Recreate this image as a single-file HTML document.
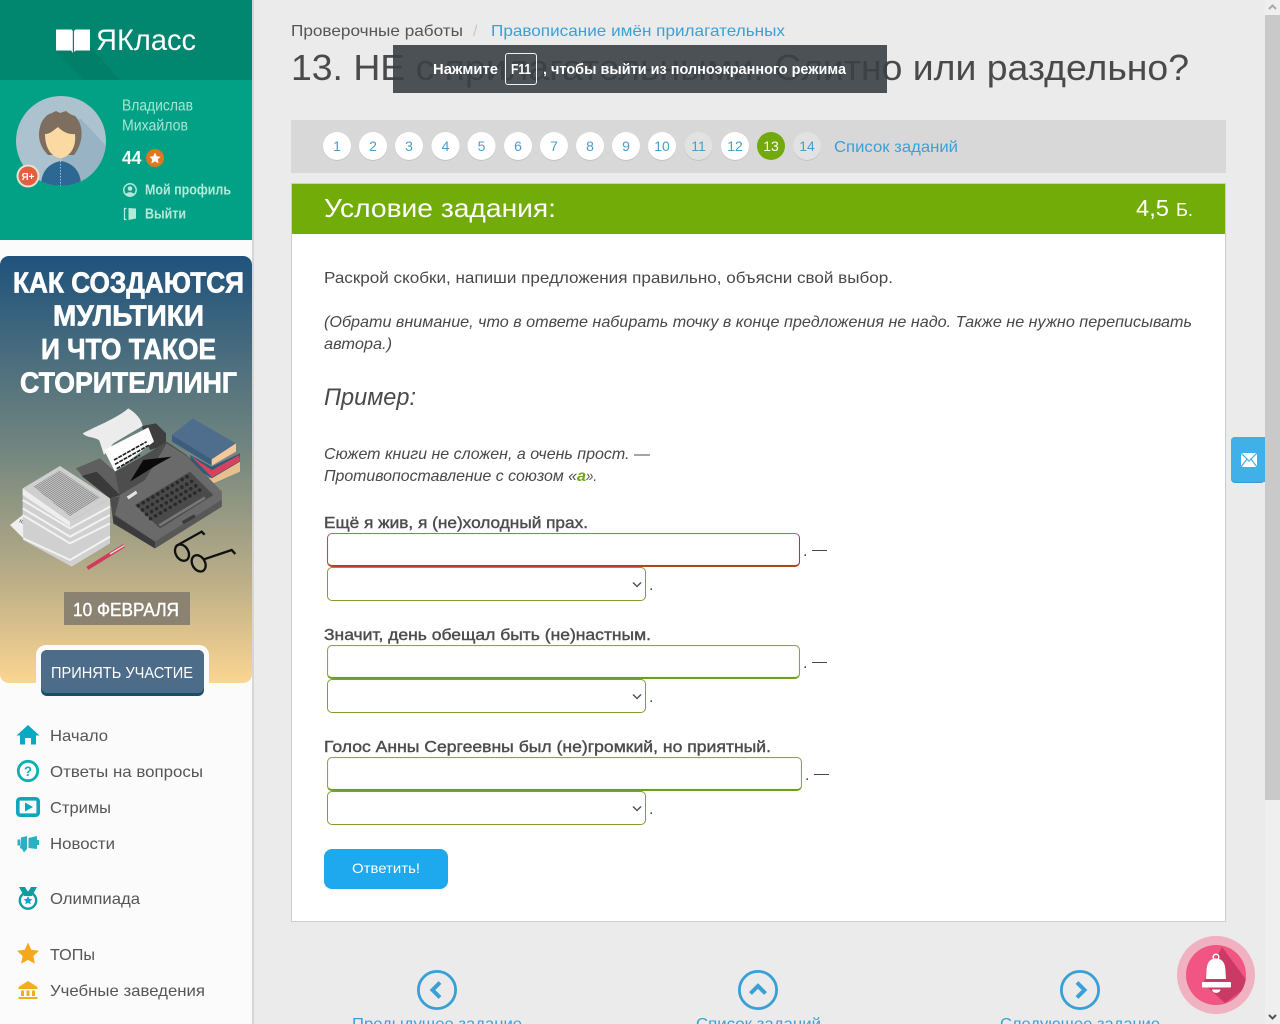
<!DOCTYPE html>
<html lang="ru">
<head>
<meta charset="utf-8">
<title>13. НЕ с прилагательными</title>
<style>
html,body{margin:0;padding:0;width:1280px;height:1024px;overflow:hidden;background:#ebebeb;font-family:"Liberation Sans",sans-serif}
svg.page{position:absolute;left:0;top:0}
svg.chev{position:absolute;pointer-events:none}
svg text{font-family:"Liberation Sans",sans-serif}
input,select{position:absolute;box-sizing:border-box;background:#fff;border-radius:5px;margin:0;padding:0 4px;outline:none}
input{border:1px solid #86a92e;border-bottom:2px solid #6ea01c;box-shadow:inset 0 0 1px #cfe0a8}
select{border:1px solid #7ea02e;width:319px;height:34px;left:327px;-webkit-appearance:none;appearance:none}
input.bad{border-color:#d34fa6 #b0297f #b0451f #c0398e}
</style>
</head>
<body>
<svg class="page" width="1280" height="1024" viewBox="0 0 1280 1024" xmlns="http://www.w3.org/2000/svg">
<defs>
<linearGradient id="ban" x1="0" y1="0" x2="0" y2="1"><stop offset="0" stop-color="#1f527c"/><stop offset=".45" stop-color="#71857f"/><stop offset=".75" stop-color="#b9ad87"/><stop offset="1" stop-color="#fbd592"/></linearGradient>
<clipPath id="avc"><circle cx="61" cy="141" r="45"/></clipPath>
<clipPath id="bellc"><circle cx="1216" cy="975" r="30"/></clipPath>
<clipPath id="headc"><rect x="0" y="0" width="252" height="80"/></clipPath>
<pattern id="hatch" width="12" height="5" patternUnits="userSpaceOnUse" patternTransform="rotate(33)"><rect width="12" height="2.2" fill="#444"/></pattern>
</defs>

<!-- main background & scrollbar -->
<rect x="0" y="0" width="1280" height="1024" fill="#ebebeb"/>
<rect x="1265" y="0" width="15" height="1024" fill="#efefef"/>
<rect x="1265" y="15" width="15" height="785" fill="#c9c9c9"/>
<path d="M1269 9l3.5-3.5 3.5 3.5" fill="none" stroke="#a8a8a8" stroke-width="2"/>
<path d="M1269 1015l3.5 3.5 3.5-3.5" fill="none" stroke="#505050" stroke-width="2"/>

<!-- sidebar -->
<rect x="252" y="0" width="2" height="1024" fill="#d6d6d6"/>
<rect x="0" y="0" width="252" height="1024" fill="#fbfbfb"/>
<rect x="0" y="0" width="252" height="80" fill="#01876f"/>
<path d="M56 52L84 80H120L90 46L72 40Z" fill="#017f69" clip-path="url(#headc)"/>
<rect x="0" y="80" width="252" height="160" fill="#02a084"/>

<!-- logo -->
<path d="M56 29.5H71.5C72.5 30 72.8 31 72.8 32V50.5L73 53L71 50.5H56Z" fill="#fff"/>
<path d="M90 29.5H75.5C74.5 30 74 31 74 32V52L76 50.5H90Z" fill="#fff"/>
<text x="96" y="50" font-size="30" fill="#fff" textLength="100" lengthAdjust="spacingAndGlyphs">ЯКласс</text>

<!-- avatar -->
<circle cx="61" cy="141" r="45" fill="#adc2cf"/>
<g clip-path="url(#avc)">
<path d="M80 118L110 150V190H70L60 150Z" fill="#98b3c4"/>
<path d="M41 186C41 170 50 163 61 161C72 163 81 170 81 186V190H41Z" fill="#2c6893"/>
<path d="M60.5 161V186" stroke="#9cc0d6" stroke-width="1" stroke-dasharray="1.5 1.5"/>
<path d="M39 135C39 124 44 115 52 113L56 111L60 113L66 111L70 114L75 116C80 121 82 128 81.500 136C81 143 78 150 74 155L48 155C43 150 39 143 39 135Z" fill="#7d6e5f"/>
<path d="M45 134C50 134 54 130 58 127C62 131 68 135 75 134C76 144 73 151 68 155C63 159 58 159 53 155C48 151 45 144 45 134Z" fill="#fad9a3"/>
</g>
<circle cx="28" cy="176" r="11.500" fill="#e8e0d8"/>
<circle cx="28" cy="176" r="9.500" fill="#e2603d"/>
<text x="21.500" y="180" font-size="10.500" font-weight="700" fill="#fff" textLength="13" lengthAdjust="spacingAndGlyphs">Я+</text>

<text x="122" y="110.500" font-size="15.500" fill="#a5e5d6" textLength="71" lengthAdjust="spacingAndGlyphs">Владислав</text>
<text x="122" y="130.500" font-size="15.500" fill="#a5e5d6" textLength="66" lengthAdjust="spacingAndGlyphs">Михайлов</text>
<text x="122" y="164" font-size="18" font-weight="700" fill="#f3fbf9" textLength="19.500" lengthAdjust="spacingAndGlyphs">44</text>
<circle cx="155" cy="158" r="9" fill="#e2761c"/>
<path d="M155 152.500l1.700 3.700 4 .5-2.900 2.700.8 4-3.600-2-3.600 2 .8-4-2.900-2.700 4-.5z" fill="#fff"/>
<circle cx="130" cy="190" r="6.200" fill="none" stroke="#b5e9da" stroke-width="1.500"/>
<circle cx="130" cy="188.500" r="2.300" fill="#b5e9da"/>
<path d="M125.500 194.500C127 191.500 133 191.500 134.500 194.500C132 196.500 128 196.500 125.500 194.500Z" fill="#b5e9da"/>
<text x="145" y="194.500" font-size="15" font-weight="700" fill="#b4e9da" textLength="86" lengthAdjust="spacingAndGlyphs">Мой профиль</text>
<path d="M126.500 208.500H124.500V219.500H126.500" fill="none" stroke="#b5e9da" stroke-width="1.300"/>
<path d="M128.500 208L136 208.500V218.500L128.500 220Z" fill="#b5e9da"/>
<text x="145" y="218.500" font-size="15" font-weight="700" fill="#b4e9da" textLength="41" lengthAdjust="spacingAndGlyphs">Выйти</text>

<!-- banner -->
<rect x="0" y="256" width="252" height="427" rx="9" fill="url(#ban)"/>
<g font-weight="700" fill="#fff" stroke="#fff" stroke-width=".7" font-size="29">
<text x="13" y="292.500" textLength="231" lengthAdjust="spacingAndGlyphs">КАК СОЗДАЮТСЯ</text>
<text x="53" y="325.500" textLength="151" lengthAdjust="spacingAndGlyphs">МУЛЬТИКИ</text>
<text x="41" y="359" textLength="175" lengthAdjust="spacingAndGlyphs">И ЧТО ТАКОЕ</text>
<text x="20" y="392.500" textLength="217" lengthAdjust="spacingAndGlyphs">СТОРИТЕЛЛИНГ</text>
</g>

<!-- illustration, drawn in 3x crop coordinates -->
<g transform="translate(0 400) scale(.33333)">
 <!-- books -->
 <path d="M625 235L720 185V215L640 250Z" fill="#e8c08e"/>
 <path d="M570 165L635 200L720 160V185L635 235L575 195Z" fill="#2f5a7a"/>
 <path d="M572 168L636 210L718 165L720 183L636 232Z" fill="#d8415c"/>
 <path d="M516 105L578 55L708 130L635 178Z" fill="#4f6e8e"/>
 <path d="M516 105L635 178V197L516 125Z" fill="#3c5d7d"/>
 <path d="M635 178L708 130V155L635 197Z" fill="#f5c79c"/>
 <!-- roller & paper -->
 <path d="M425 78L468 70L498 100V135L450 150Z" fill="#3e3e3e"/>
 <path d="M248 100C290 78 350 55 385 25C410 40 425 60 428 78L340 130L312 165L298 122C288 110 262 115 248 100Z" fill="#ececec"/>
 <path d="M312 150L445 82L462 125L345 215Z" fill="#fdfdfd"/>
 <path d="M342 180L440 125M345 193L448 135M350 206L420 165" stroke="#222" stroke-width="5" stroke-dasharray="12 3" fill="none"/>
 <!-- body -->
 <path d="M228 205L300 175L345 215L435 165L500 125L560 165L665 275V320L465 445L340 370L330 295L245 225Z" fill="#4d4d4d"/>
 <path d="M228 205L300 175L345 215L360 290L330 295L245 225Z" fill="#5f5f5f"/>
 <path d="M360 285L435 240L500 130L560 168L665 275V300L465 425L345 345Z" fill="#6a6a6a"/>
 <path d="M340 345L465 425V445L340 370Z" fill="#3b3b3b"/>
 <path d="M465 425L665 300V320L465 445Z" fill="#585858"/>
 <path d="M390 245L430 180L515 170L470 195Z" fill="#0a0a0a"/>
 <path d="M245 228L290 215L360 285L330 295Z" fill="#3a3a3a"/>
 <path d="M380 290L408 272L412 280L386 298Z" fill="#e6e6e6"/>
 <path d="M405 315L570 215L640 285L480 385Z" fill="#4a4a4a"/>
 <g stroke="#2a2a2a" stroke-width="11" stroke-linecap="round" stroke-dasharray="0 17" fill="none">
  <path d="M415 317L568 226"/><path d="M428 330L582 240"/><path d="M440 343L595 253"/><path d="M452 356L608 265"/>
 </g>
 <path d="M478 376L615 293" stroke="#777" stroke-width="8"/>
 <path d="M548 368L585 347" stroke="#3b3b3b" stroke-width="10"/>
 <!-- papers -->
 <path d="M30 375L68 345L205 420L205 470L70 415Z" fill="#efefef"/>
 <path d="M60 362L185 422" stroke="#555" stroke-width="10" stroke-dasharray="2 3" fill="none"/>
 <path d="M68 265V340L70 420L215 500L330 430V295L210 365Z" fill="#d0d0d0"/>
 <path d="M68 300L210 385L330 320M68 325L210 410L330 345M68 345L210 430L330 370M70 415L210 480L330 410" stroke="#f2f2f2" stroke-width="6" fill="none"/>
 <path d="M68 265L180 198L330 295L210 365Z" fill="#cfcfcf"/>
 <path d="M68 265L210 365V380L68 285Z" fill="#eeeeee"/>
 <path d="M100 260L178 212L300 292L210 348Z" fill="url(#hatch)" opacity=".6"/>
 <!-- pen -->
 <path d="M262 505L372 437" stroke="#d23a5c" stroke-width="11"/>
 <path d="M330 462L372 437" stroke="#e8e0e0" stroke-width="4"/>
 <!-- glasses -->
 <g fill="none" stroke="#111" stroke-width="7">
  <ellipse cx="546" cy="458" rx="19" ry="26" transform="rotate(-30 546 458)"/>
  <ellipse cx="596" cy="490" rx="19" ry="26" transform="rotate(-30 596 490)"/>
  <path d="M528 438L605 395L614 404M612 478L695 450L706 462"/>
 </g>
</g>

<rect x="64" y="592" width="126" height="33" fill="#8b8271"/>
<text x="73" y="616" font-size="18" fill="#fff" textLength="106" lengthAdjust="spacingAndGlyphs" stroke="#fff" stroke-width=".4">10 ФЕВРАЛЯ</text>
<rect x="36" y="645" width="173" height="56" rx="10" fill="#fbfbfb"/>
<rect x="41" y="650" width="163" height="46" rx="6" fill="#164f69"/>
<rect x="41" y="650" width="163" height="43" rx="6" fill="#4d6c8a"/>
<text x="51" y="678" font-size="16" fill="#fff" textLength="142" lengthAdjust="spacingAndGlyphs">ПРИНЯТЬ УЧАСТИЕ</text>

<!-- side nav -->
<g font-size="16" fill="#555">
<text x="50" y="741" textLength="58" lengthAdjust="spacingAndGlyphs">Начало</text>
<text x="50" y="777" textLength="153" lengthAdjust="spacingAndGlyphs">Ответы на вопросы</text>
<text x="50" y="813" textLength="61" lengthAdjust="spacingAndGlyphs">Стримы</text>
<text x="50" y="849" textLength="65" lengthAdjust="spacingAndGlyphs">Новости</text>
<text x="50" y="904" textLength="90" lengthAdjust="spacingAndGlyphs">Олимпиада</text>
<text x="50" y="960" textLength="45" lengthAdjust="spacingAndGlyphs">ТОПы</text>
<text x="50" y="996" textLength="155" lengthAdjust="spacingAndGlyphs">Учебные заведения</text>
</g>
<path d="M28 725L39.500 735.500H36V744.500H31V738H25V744.500H20V735.500H16.500Z" fill="#0aa9c2"/>
<circle cx="28" cy="771" r="9.700" fill="none" stroke="#0db0b0" stroke-width="2.800"/>
<text x="24" y="776" font-size="14" font-weight="700" fill="#0db0b0" textLength="8" lengthAdjust="spacingAndGlyphs">?</text>
<rect x="17.800" y="798.800" width="20.400" height="16.400" rx="2.500" fill="none" stroke="#0fa6bd" stroke-width="3.600"/>
<path d="M25 802.500L33 807L25 811.500Z" fill="#0fa6bd"/>
<path d="M21 837.500L27 836V849L24 852.500L22 849L20 848Z" fill="#2cafc2"/>
<path d="M28.500 838L37 836V849L28.500 848Z" fill="#2cafc2"/>
<rect x="17.500" y="839.500" width="2.500" height="6" fill="#2cafc2"/>
<rect x="37" y="840" width="2" height="5" fill="#2cafc2"/>
<path d="M19 887H25L28 892L31 887H37L32 896H24Z" fill="#0f9ea0"/>
<circle cx="28" cy="900.500" r="8.200" fill="none" stroke="#0f9ea0" stroke-width="2.400"/>
<path d="M28 896l1.300 2.900 3.100.3-2.300 2.100.7 3.100-2.800-1.600-2.800 1.600.7-3.100-2.300-2.100 3.100-.3z" fill="#0aa9c2"/>
<path d="M28 942.500l3.300 7.200 7.700 1-5.700 5.300 1.600 7.800-6.900-3.900-6.900 3.900 1.600-7.800-5.700-5.300 7.700-1z" fill="#f5a81c"/>
<path d="M28 981L37.500 987V989H18.500V987Z" fill="#f2ad1e"/>
<path d="M21 990.500H24V996H21ZM26.500 990.500H29.500V996H26.500ZM32 990.500H35V996H32Z" fill="#f2ad1e"/>
<rect x="18.500" y="997" width="19" height="2" fill="#f2ad1e"/>

<!-- breadcrumbs and title -->
<text x="291" y="36" font-size="16" fill="#555" textLength="172" lengthAdjust="spacingAndGlyphs">Проверочные работы</text>
<text x="473" y="36" font-size="16" fill="#c6c6c6">/</text>
<text x="491" y="36" font-size="16" fill="#3aa0d8" textLength="294" lengthAdjust="spacingAndGlyphs">Правописание имён прилагательных</text>
<text x="291" y="80" font-size="36" fill="#4a4a4a" textLength="898" lengthAdjust="spacingAndGlyphs">13. НЕ с прилагательными. Слитно или раздельно?</text>

<!-- pagination -->
<rect x="291" y="120" width="935" height="53" fill="#d8d8d8"/>
<g fill="#c4c4c4">
<circle cx="337" cy="147" r="14"/><circle cx="373" cy="147" r="14"/><circle cx="409" cy="147" r="14"/><circle cx="445.500" cy="147" r="14"/><circle cx="481.500" cy="147" r="14"/><circle cx="518" cy="147" r="14"/><circle cx="554" cy="147" r="14"/><circle cx="590" cy="147" r="14"/><circle cx="626" cy="147" r="14"/><circle cx="662" cy="147" r="14"/><circle cx="698.500" cy="147" r="14"/><circle cx="735" cy="147" r="14"/><circle cx="807" cy="147" r="14"/>
</g>
<g fill="#fff">
<circle cx="337" cy="146" r="14"/><circle cx="373" cy="146" r="14"/><circle cx="409" cy="146" r="14"/><circle cx="445.500" cy="146" r="14"/><circle cx="481.500" cy="146" r="14"/><circle cx="518" cy="146" r="14"/><circle cx="554" cy="146" r="14"/><circle cx="590" cy="146" r="14"/><circle cx="626" cy="146" r="14"/><circle cx="662" cy="146" r="14"/><circle cx="735" cy="146" r="14"/>
</g>
<circle cx="698.500" cy="146" r="14" fill="#e2e2e2"/>
<circle cx="807" cy="146" r="14" fill="#e2e2e2"/>
<circle cx="771" cy="146" r="14" fill="#72a90d"/>
<g font-size="14" fill="#4b9dc9" text-anchor="middle">
<text x="337" y="151">1</text><text x="373" y="151">2</text><text x="409" y="151">3</text><text x="445.500" y="151">4</text><text x="481.500" y="151">5</text><text x="518" y="151">6</text><text x="554" y="151">7</text><text x="590" y="151">8</text><text x="626" y="151">9</text><text x="662" y="151">10</text><text x="698.500" y="151">11</text><text x="735" y="151">12</text><text x="771" y="151" fill="#fff">13</text><text x="807" y="151">14</text>
</g>
<text x="834" y="152" font-size="16" fill="#3aa0d8" textLength="124" lengthAdjust="spacingAndGlyphs">Список заданий</text>

<!-- card -->
<rect x="291.500" y="183.500" width="934" height="738" fill="#fff" stroke="#cdcdcd"/>
<rect x="292" y="184" width="933" height="50" fill="#72ac08"/>
<text x="324" y="217" font-size="26" fill="#fff" textLength="232" lengthAdjust="spacingAndGlyphs">Условие задания:</text>
<text x="1136" y="216" font-size="23" fill="#fff" textLength="33" lengthAdjust="spacingAndGlyphs">4,5</text>
<text x="1176" y="216" font-size="18" fill="#fff" textLength="17" lengthAdjust="spacingAndGlyphs">Б.</text>

<text x="324" y="283" font-size="16" fill="#484848" textLength="569" lengthAdjust="spacingAndGlyphs">Раскрой скобки, напиши предложения правильно, объясни свой выбор.</text>
<text x="324" y="327" font-size="16" font-style="italic" fill="#484848" textLength="868" lengthAdjust="spacingAndGlyphs">(Обрати внимание, что в ответе набирать точку в конце предложения не надо. Также не нужно переписывать</text>
<text x="324" y="349" font-size="16" font-style="italic" fill="#484848" textLength="68" lengthAdjust="spacingAndGlyphs">автора.)</text>
<text x="324" y="405" font-size="24" font-style="italic" fill="#4a4a4a" textLength="92" lengthAdjust="spacingAndGlyphs">Пример:</text>
<text x="324" y="459" font-size="16" font-style="italic" fill="#484848" textLength="326" lengthAdjust="spacingAndGlyphs">Сюжет книги не сложен, а очень прост. —</text>
<text x="324" y="481" font-size="16" font-style="italic" fill="#484848" textLength="253" lengthAdjust="spacingAndGlyphs">Противопоставление с союзом «</text>
<text x="577" y="481" font-size="16" font-style="italic" font-weight="700" fill="#6ea51a" textLength="9" lengthAdjust="spacingAndGlyphs">а</text>
<text x="586" y="481" font-size="16" font-style="italic" fill="#484848" textLength="11" lengthAdjust="spacingAndGlyphs">».</text>

<g font-size="16" fill="#4c4c4c" stroke="#4c4c4c" stroke-width=".4">
<text x="324" y="528" textLength="264" lengthAdjust="spacingAndGlyphs">Ещё я жив, я (не)холодный прах.</text>
<text x="324" y="640" textLength="327" lengthAdjust="spacingAndGlyphs">Значит, день обещал быть (не)настным.</text>
<text x="324" y="752" textLength="447" lengthAdjust="spacingAndGlyphs">Голос Анны Сергеевны был (не)громкий, но приятный.</text>
</g>
<g font-size="16" fill="#484848">
<text x="803" y="556">.</text><path d="M812 550.500H827M812 662.500H827" stroke="#484848" stroke-width="1"/>
<text x="803" y="668">.</text>
<text x="805" y="780">.</text><path d="M814 774.500H829" stroke="#484848" stroke-width="1"/>
<text x="649" y="590">.</text><text x="649" y="702">.</text><text x="649" y="814">.</text>
</g>

<rect x="324" y="849" width="124" height="40" rx="8" fill="#1ea8ee"/>
<text x="352" y="873" font-size="14" fill="#fff" textLength="68" lengthAdjust="spacingAndGlyphs">Ответить!</text>

<!-- bottom nav -->
<g fill="none" stroke="#38a0d6" stroke-width="2.800">
<circle cx="437" cy="990" r="18.600"/><circle cx="758" cy="990" r="18.600"/><circle cx="1080" cy="990" r="18.600"/>
</g>
<g fill="none" stroke="#38a0d6" stroke-width="4">
<path d="M440 982.500L432.500 990L440 997.500"/><path d="M750.500 993.500L758 986L765.500 993.500"/><path d="M1077 982.500L1084.500 990L1077 997.500"/>
</g>
<g font-size="16" fill="#3aa0d8">
<text x="352" y="1029" textLength="170" lengthAdjust="spacingAndGlyphs">Предыдущее задание</text>
<text x="696" y="1029" textLength="125" lengthAdjust="spacingAndGlyphs">Список заданий</text>
<text x="1000" y="1029" textLength="160" lengthAdjust="spacingAndGlyphs">Следующее задание</text>
</g>

<!-- mail tab -->
<rect x="1231" y="437" width="34" height="46" rx="4" fill="#3a9ccd"/>
<path d="M1235 437H1265V482H1235A4 4 0 0 1 1231 478V441A4 4 0 0 1 1235 437Z" fill="#40b0e8"/>
<rect x="1241" y="453" width="16" height="14" fill="#fff"/>
<path d="M1241 453L1249 461L1257 453M1241 467L1247 459M1257 467L1251 459" fill="none" stroke="#40b0e8" stroke-width="1.200"/>

<!-- bell -->
<circle cx="1216" cy="975" r="39" fill="#f0b1c1"/>
<circle cx="1216" cy="975" r="30" fill="#f15581"/>
<path d="M1222 947L1250 985L1225 1003L1203 983Z" fill="#c93a65" clip-path="url(#bellc)"/>
<circle cx="1216" cy="957" r="2.800" fill="none" stroke="#fff" stroke-width="1.500"/>
<path d="M1206 979C1207 970 1205 959 1216 958.500C1227 959 1225 970 1226 979Z" fill="#fff"/>
<rect x="1202" y="982" width="29" height="5.500" rx="1" fill="#fff"/>
<path d="M1212 989.500H1220.500C1220 994 1212.500 994 1212 989.500Z" fill="#fff"/>

<!-- F11 notice -->
<rect x="393" y="45" width="494" height="48" fill="#3b4045" fill-opacity=".9"/>
<text x="433" y="74" font-size="15" font-weight="700" fill="#fff" textLength="65" lengthAdjust="spacingAndGlyphs">Нажмите</text>
<rect x="505.500" y="53.500" width="31" height="31" rx="2.500" fill="none" stroke="#f2f2f2"/>
<text x="511" y="74" font-size="15" font-weight="700" fill="#fff" textLength="20" lengthAdjust="spacingAndGlyphs">F11</text>
<text x="543" y="74" font-size="15" font-weight="700" fill="#fff" textLength="303" lengthAdjust="spacingAndGlyphs">, чтобы выйти из полноэкранного режима</text>
</svg>

<input class="bad" type="text" style="left:327px;top:533px;width:473px;height:34px">
<select style="top:567px"><option></option></select>
<input type="text" style="left:327px;top:645px;width:473px;height:34px">
<select style="top:679px"><option></option></select>
<input type="text" style="left:327px;top:757px;width:475px;height:34px">
<select style="top:791px"><option></option></select>

<svg class="chev" style="left:632px;top:581px" width="10" height="7" viewBox="0 0 10 7"><path d="M1 1.500L5 5.500L9 1.500" fill="none" stroke="#555" stroke-width="1.500"/></svg>
<svg class="chev" style="left:632px;top:693px" width="10" height="7" viewBox="0 0 10 7"><path d="M1 1.500L5 5.500L9 1.500" fill="none" stroke="#555" stroke-width="1.500"/></svg>
<svg class="chev" style="left:632px;top:805px" width="10" height="7" viewBox="0 0 10 7"><path d="M1 1.500L5 5.500L9 1.500" fill="none" stroke="#555" stroke-width="1.500"/></svg>
</body>
</html>
